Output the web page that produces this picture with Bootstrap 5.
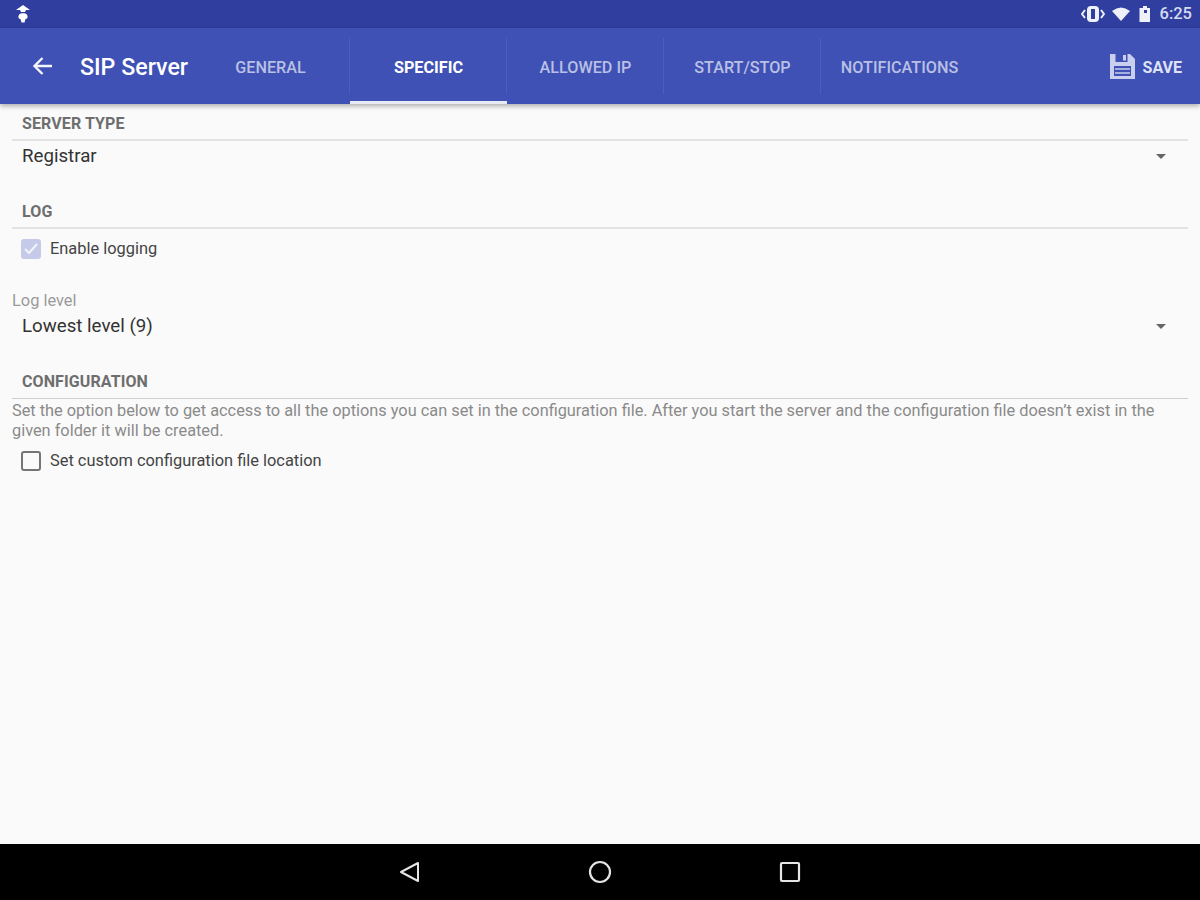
<!doctype html>
<html lang="en">
<head>
<meta charset="utf-8">
<title>SIP Server</title>
<link href="https://cdn.jsdelivr.net/npm/bootstrap@5.3.0/dist/css/bootstrap.min.css" rel="stylesheet">
<style>
html,body{height:100%;}
body{font-family:Roboto,"Liberation Sans",sans-serif;background:#fafafa;width:1200px;height:900px;overflow:hidden;}
.app-shell{height:900px;}
.status-strip{height:28px;background:#303f9f;color:#fff;padding:0 8px 0 14px;}
.status-time{font-size:16.5px;font-weight:500;color:#d5daf0;line-height:1;margin-left:-1px;}
.icon-vibrate{margin-right:6px;}
.icon-wifi{margin-right:7px;}
.app-bar{height:76px;background:#3f51b5;box-shadow:0 2px 5px rgba(0,0,0,.32);position:relative;z-index:2;}
.back-zone{width:80px;padding-left:32px;}
.app-title{width:143px;font-size:23.2px;font-weight:500;color:#fff;line-height:1;padding-top:3px;}
.tab-cell{width:157px;height:76px;font-size:16.2px;font-weight:500;color:#b9c0e4;position:relative;padding-top:5px;}
.tab-cell::after{content:"";position:absolute;right:0;top:10px;bottom:10px;width:1px;background:rgba(255,255,255,.07);}
.tab-first{width:127px;padding-right:32px;}
.tab-cell.is-last::after{display:none;}
.tab-cell.is-active{color:#fff;font-weight:700;box-shadow:inset 0 -3px 0 #e8eaf6;}
.save-zone{padding-right:18px;color:#dfe3f5;font-size:16px;font-weight:700;gap:7px;padding-top:1px;}
.save-zone span{padding-top:2px;}
.content-zone{padding:0 12px;color:#333;}
.sec-head{font-size:16px;font-weight:700;color:#6e6e6e;padding-left:10px;padding-top:2px;line-height:20px;height:29px;border-bottom:2px solid #e2e2e2;letter-spacing:.1px;}
.head-type{margin-top:8px;}
.head-log{margin-top:30px;}
.head-config{margin-top:29px;border-bottom-width:1px;border-color:#cfcfcf;}
.spin-row{font-size:18.7px;color:#333;padding:0 21px 0 10px;line-height:24px;}
.spin-type{height:28px;margin-top:1px;}
.spin-level{height:30px;margin-top:1px;}
.spin-caret{width:0;height:0;border-left:5px solid transparent;border-right:5px solid transparent;border-top:5px solid #666;margin-right:1px;}
.check-row{font-size:16.4px;color:#444;padding-left:9px;gap:9px;line-height:22px;height:24px;}
.check-log{margin-top:8px;}
.check-config{margin-top:9px;}
.box-on{width:20px;height:20px;border-radius:3px;background:#c5cae9;display:flex;align-items:center;justify-content:center;}
.box-off{width:20px;height:20px;border-radius:3px;border:2px solid #757575;}
.field-cap{font-size:16.4px;color:#9a9a9a;line-height:18px;margin-top:31px;}
.help-text{font-size:16.33px;color:#8a8a8a;line-height:19.5px;margin-top:2px;}
.nav-strip{height:56px;background:#000;margin-top:auto;}
.nav-slot{width:190px;}
</style>
</head>
<body>
<div class="app-shell d-flex flex-column">
  <div class="status-strip d-flex align-items-center justify-content-between">
    <svg width="18" height="20" viewBox="0 0 18 20" aria-hidden="true"><path d="M9 1 L16 6 H12 L11 8 H7 L6 6 H2Z M5 11 C5 8.800 13 8.800 13 11 C14.500 13 13 15 11.500 15 L10.500 18.500 H7.500 L6.500 15 C5 15 3.500 13 5 11Z" fill="#fff"/></svg>
    <div class="d-flex align-items-center">
      <svg width="24" height="20" viewBox="0 0 24 20" class="icon-vibrate" aria-hidden="true"><rect x="6" y="2" width="12" height="16" rx="4" fill="#eef0fa"/><rect x="10" y="5" width="4" height="10" fill="#303f9f"/><path d="M4 6 1 10l3 4M20 6l3 4-3 4" fill="none" stroke="#eef0fa" stroke-width="2"/></svg>
      <svg width="20" height="16" viewBox="0 0 20 16" class="icon-wifi" aria-hidden="true"><path d="M1 5 Q10 -2 19 5 L10 15Z" fill="#eef0fa"/></svg>
      <svg width="14" height="18" viewBox="0 0 14 18" class="me-1" aria-hidden="true"><path d="M5 1h4v2h3v14H1.500V3H5z" fill="#eef0fa"/><path d="M6 5h3v3H6z" fill="#303f9f"/></svg>
      <span class="status-time ms-1">6:25</span>
    </div>
  </div>
  <div class="app-bar d-flex align-items-center">
    <div class="back-zone d-flex align-items-center">
      <svg width="21" height="20" viewBox="0 0 21 20" aria-hidden="true"><path d="M20 10H3M10.500 2 2.500 10l8 8" fill="none" stroke="#f4f5fc" stroke-width="2.400"/></svg>
    </div>
    <div class="app-title">SIP Server</div>
    <div class="tab-cell tab-first d-flex align-items-center justify-content-center">GENERAL</div>
    <div class="tab-cell is-active d-flex align-items-center justify-content-center">SPECIFIC</div>
    <div class="tab-cell d-flex align-items-center justify-content-center">ALLOWED IP</div>
    <div class="tab-cell d-flex align-items-center justify-content-center">START/STOP</div>
    <div class="tab-cell is-last d-flex align-items-center justify-content-center">NOTIFICATIONS</div>
    <div class="save-zone ms-auto d-flex align-items-center">
      <svg width="27" height="27" viewBox="0 0 27 27" aria-hidden="true"><path d="M1 1H21L26 6V26H1Z" fill="#c9cfec"/><rect x="6.500" y="1" width="12" height="8" fill="#3f51b5"/><rect x="14" y="2" width="3" height="5.500" fill="#c9cfec"/><rect x="5" y="13" width="17" height="10" fill="#3f51b5"/><path d="M6 16h15M6 20h15" stroke="#c9cfec" stroke-width="1.500"/></svg>
      <span>SAVE</span>
    </div>
  </div>
  <div class="content-zone flex-grow-1">
    <div class="sec-head head-type">SERVER TYPE</div>
    <div class="spin-row spin-type d-flex align-items-center justify-content-between"><span>Registrar</span><span class="spin-caret"></span></div>
    <div class="sec-head head-log">LOG</div>
    <div class="check-row check-log d-flex align-items-center">
      <span class="box-on"><svg width="16" height="14" viewBox="0 0 16 14" aria-hidden="true"><path d="M2 7l4 4 8-9" fill="none" stroke="#f2f3fb" stroke-width="2"/></svg></span>
      <span>Enable logging</span>
    </div>
    <div class="field-cap">Log level</div>
    <div class="spin-row spin-level d-flex align-items-center justify-content-between"><span>Lowest level (9)</span><span class="spin-caret"></span></div>
    <div class="sec-head head-config">CONFIGURATION</div>
    <div class="help-text">Set the option below to get access to all the options you can set in the configuration file. After you start the server and the configuration file doesn’t exist in the given folder it will be created.</div>
    <div class="check-row check-config d-flex align-items-center">
      <span class="box-off"></span>
      <span>Set custom configuration file location</span>
    </div>
  </div>
  <div class="nav-strip d-flex align-items-center justify-content-center">
    <div class="nav-slot d-flex justify-content-center"><svg width="24" height="24" viewBox="0 0 24 24" aria-hidden="true"><path d="M20 3V21L3 12Z" fill="none" stroke="#e4e4e4" stroke-width="2" stroke-linejoin="round"/></svg></div>
    <div class="nav-slot d-flex justify-content-center"><svg width="24" height="24" viewBox="0 0 24 24" aria-hidden="true"><circle cx="12" cy="12" r="10" fill="none" stroke="#e4e4e4" stroke-width="2.200"/></svg></div>
    <div class="nav-slot d-flex justify-content-center"><svg width="24" height="24" viewBox="0 0 24 24" aria-hidden="true"><rect x="3" y="3" width="18" height="18" rx="1" fill="none" stroke="#e4e4e4" stroke-width="2.200"/></svg></div>
  </div>
</div>
<script src="https://cdn.jsdelivr.net/npm/bootstrap@5.3.0/dist/js/bootstrap.bundle.min.js"></script>
</body>
</html>
